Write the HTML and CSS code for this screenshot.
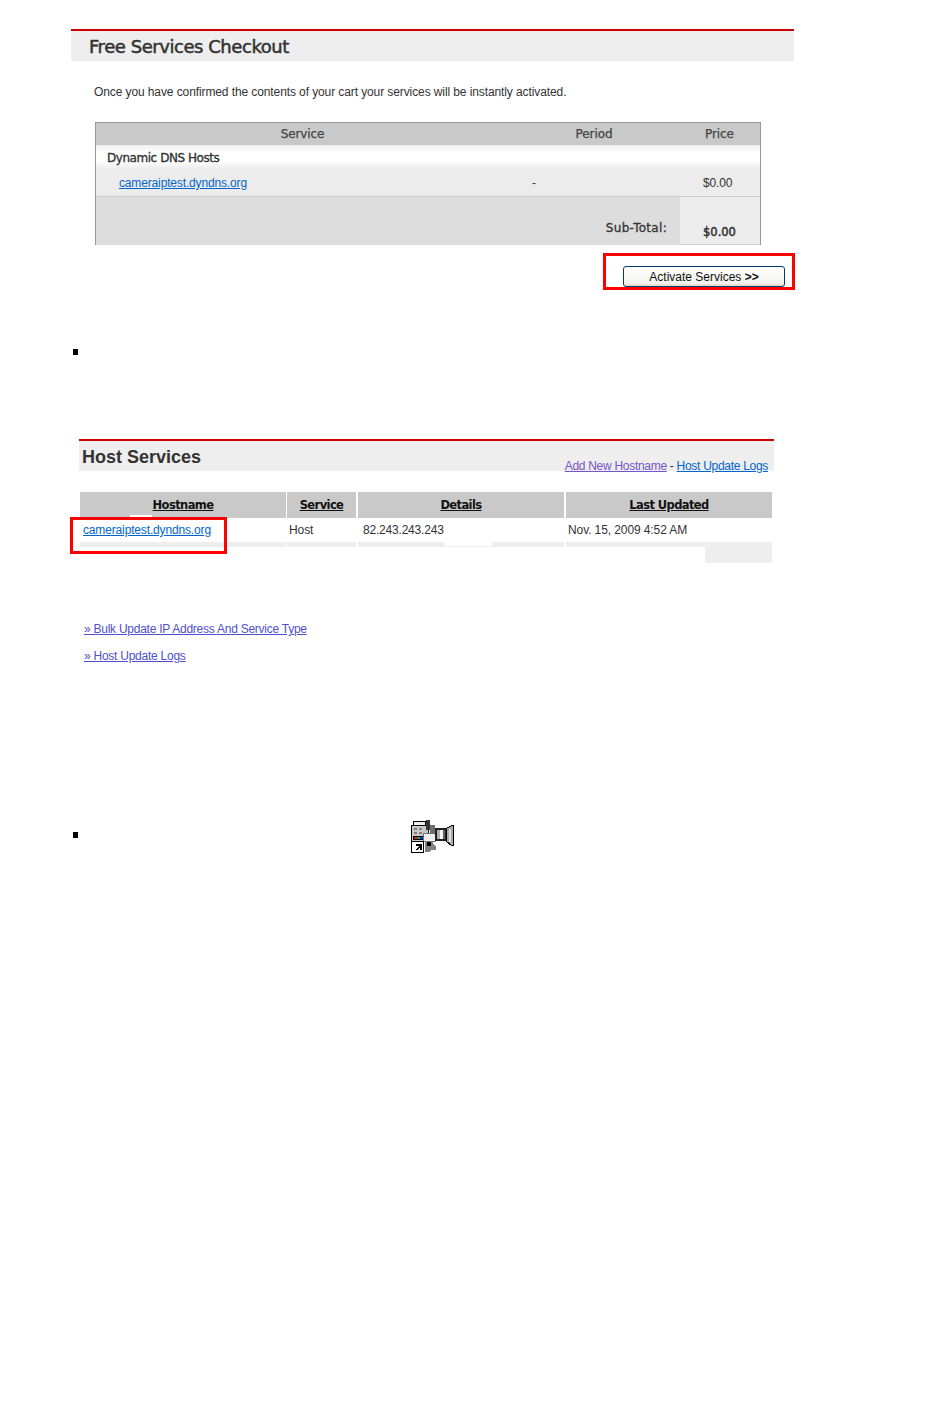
FILE: index.html
```html
<!DOCTYPE html>
<html lang="en">
<head>
<meta charset="utf-8">
<title>Free Services Checkout</title>
<link rel="stylesheet" href="styles.css">
</head>
<body>
<main class="page">
  <section class="checkout">
    <header class="panel-head panel-head-checkout"><h1 class="title-checkout">Free Services Checkout</h1></header>
    <p class="intro">Once you have confirmed the contents of your cart your services will be instantly activated.</p>
    <div class="cart">
      <div class="cart-row cart-header"><span class="c-service">Service</span><span class="c-period">Period</span><span class="c-price">Price</span></div>
      <div class="cart-group">Dynamic DNS Hosts</div>
      <div class="cart-row cart-item"><span class="c-host"><a class="link" href="#">cameraiptest.dyndns.org</a></span><span class="c-dash">-</span><span class="c-cost">$0.00</span></div>
      <div class="cart-total"><span class="total-label">Sub-Total:</span><span class="total-value">$0.00</span></div>
    </div>
    <div class="action-row">
      <div class="callout callout-button"><button class="activate" type="button">Activate Services <b>&gt;&gt;</b></button></div>
    </div>
  </section>

  <div class="bullet-row bullet-one"><span class="bullet"></span></div>

  <section class="hosts">
    <header class="panel-head panel-head-hosts">
      <h2 class="title-hosts">Host Services</h2>
      <div class="head-links"><a class="link visited" href="#">Add New Hostname</a> - <a class="link" href="#">Host Update Logs</a></div>
    </header>
    <div class="host-table">
      <div class="host-row host-header">
        <a class="th th-first" href="#">Hostname</a><a class="th" href="#">Service</a><a class="th" href="#">Details</a><a class="th" href="#">Last Updated</a>
      </div>
      <div class="host-row host-body">
        <span class="td td-host"><a class="link" href="#">cameraiptest.dyndns.org</a></span>
        <span class="td">Host</span>
        <span class="td td-ip">82.243.243.243</span>
        <span class="td">Nov. 15, 2009 4:52 AM</span>
      </div>
      <div class="host-row host-foot">
        <span class="tf tf-first"></span><span class="tf"></span><span class="tf tf-details"></span><span class="tf tf-updated"></span>
      </div>
      <div class="callout callout-host"></div>
    </div>
    <nav class="host-links">
      <a class="link indigo" href="#">» Bulk Update IP Address And Service Type</a>
      <a class="link indigo" href="#">» Host Update Logs</a>
    </nav>
  </section>

  <div class="bullet-row bullet-two">
    <span class="bullet"></span>
    <svg class="camera" width="44" height="36" viewBox="0 0 44 36" shape-rendering="crispEdges" aria-label="Camera shortcut">
      <path d="M0.5 5.500h17v16h-17z" fill="#c8c8c8" stroke="#000"/>
      <path d="M2.500 1.500h12v4h-12z" fill="#eee" stroke="#000"/>
      <path d="M15 0h4v10h-4z" fill="#333"/>
      <path d="M19 5h5v9h-5z" fill="#707070"/>
      <rect x="3" y="8" width="3" height="2" fill="#808080"/><rect x="8" y="8" width="3" height="2" fill="#808080"/>
      <rect x="3" y="12" width="3" height="2" fill="#808080"/><rect x="8" y="12" width="3" height="2" fill="#808080"/>
      <rect x="2" y="16" width="11" height="4" fill="#000"/>
      <rect x="3" y="17" width="3" height="2" fill="#e01010"/><rect x="6" y="17" width="3" height="2" fill="#10b040"/><rect x="9" y="17" width="3" height="2" fill="#1030e0"/>
      <path d="M12.500 13.500h12v8h-12z" fill="#eee" stroke="#707070"/>
      <path d="M24 8h11v13h-11z" fill="#202020"/>
      <path d="M26 10h3v9h-3z" fill="#b0b0b0"/>
      <path d="M29 10h3v9h-3z" fill="#f4f4f4"/>
      <path d="M32 10h2v9h-2z" fill="#606060"/>
      <path d="M35.500 8.500l5-3h1.500v20h-1.500l-5-4z" fill="#a8a8a8" stroke="#000"/>
      <path d="M38 9h2v13h-2z" fill="#e0e0e0"/>
      <path d="M14 21h8v3l3 3v3h-4l-3 2h-4z" fill="#808080"/>
      <path d="M16 22h4v4h-4z" fill="#000"/>
      <rect x="0.500" y="21.500" width="12" height="11" fill="#fff" stroke="#000"/>
      <path d="M4 30l2-2 1-1 1-1h-3v-2h6v6h-2v-3l-3 3z" fill="#000"/>
    </svg>
  </div>
</main>
</body>
</html>
```
FILE: styles.css
```css
* { box-sizing: border-box; }
html, body { margin: 0; padding: 0; background: #fff; }
body { height: 1420px; overflow: hidden; font-family: "Liberation Sans", Arial, sans-serif; color: #333; }
.page { padding: 29px 0 0 71px; width: 795px; }
a { color: inherit; }
.link { color: #0066cc; text-decoration: underline; }
.visited { color: #7755cc; }
.indigo { color: #4f4fd0; }

.panel-head { background: #eee; border-top: 2px solid #cc0000; height: 32px; }
.panel-head-checkout { width: 723px; padding: 5px 0 0 18px; }
h1, h2 { margin: 0; font-family: "DejaVu Sans", sans-serif; font-size: 18px; line-height: 22px; color: #333; }
.title-checkout { letter-spacing: -0.45px; font-weight: 400; -webkit-text-stroke: 0.5px #333; }
.intro { margin: 0; padding: 24px 0 0 23px; font-size: 12px; line-height: 14px; letter-spacing: -0.1px; height: 61px; color: #333; }

.cart { margin-left: 24px; width: 666px; height: 123px; border: 1px solid #999; border-width: 1px 1px 0; font-size: 11px; }
.cart-row { display: grid; grid-template-columns: 413px 170px 1fr; }
.cart-header { height: 22px; background: #c9c9c9; font-family: "DejaVu Sans", sans-serif; font-size: 12px; letter-spacing: -0.1px; line-height: 22px; color: #444; text-align: center; -webkit-text-stroke: 0.25px #444; }
.cart-group { height: 23px; padding-left: 11px; font-family: "DejaVu Sans", sans-serif; font-size: 12px; letter-spacing: -0.45px; line-height: 26px; color: #333; -webkit-text-stroke: 0.35px #333; background: linear-gradient(#eee, #fff 35%, #fff 70%, #eee); }
.cart-item { height: 29px; background: #ececec; border-bottom: 1px solid #ccc; line-height: 30px; font-size: 12px; letter-spacing: -0.15px; }
.c-host { padding-left: 23px; }
.c-dash { padding-left: 23px; }
.c-cost { padding-left: 24px; }
.cart-total { display: flex; height: 48px; background: #ddd; }
.total-label { width: 584px; text-align: right; padding: 24px 13px 0 0; font-family: "DejaVu Sans", sans-serif; font-size: 12px; letter-spacing: 0.3px; -webkit-text-stroke: 0.3px #333; }
.total-value { width: 80px; background: #ececec; border-bottom: 1px solid #ccc; padding: 28px 0 0 23px; font-family: "DejaVu Sans", sans-serif; font-size: 11.5px; -webkit-text-stroke: 0.5px #333; }

.action-row { display: flex; justify-content: flex-end; padding: 8px 0 0; width: 724px; }
.callout { border: 3px solid #f00; }
.callout-button { width: 192px; height: 37px; display: flex; justify-content: flex-end; padding: 10px 7px 0 0; }
.activate { width: 162px; height: 21px; padding: 0; border: 1px solid #003c74; border-radius: 3px; background: linear-gradient(#fff, #f4f4ec 85%, #dcd8c8); font: 12px/18px "Liberation Sans", sans-serif; letter-spacing: 0; color: #111; }

.bullet-row { display: flex; }
.bullet { width: 5px; height: 6px; background: #000; margin-left: 2px; flex: none; }
.bullet-one { padding-top: 59px; height: 149px; }

.hosts { margin-left: 8px; }
.panel-head-hosts { width: 695px; padding: 5px 0 0 3px; display: flex; justify-content: space-between; }
.title-hosts { font-family: "Liberation Sans", sans-serif; font-size: 18px; font-weight: 700; letter-spacing: 0; }
.head-links { padding: 13px 6px 0 0; font-size: 12px; line-height: 14px; letter-spacing: -0.29px; }

.host-table { position: relative; margin: 21px 0 0 1px; width: 692px; }
.host-row { display: grid; grid-template-columns: 205px 69px 206px 206px; column-gap: 2px; }
.host-header { height: 24px; }
.th { background: #c9c9c9; text-align: center; font-family: "DejaVu Sans", sans-serif; font-size: 11.5px; font-weight: 700; line-height: 26px; color: #111; letter-spacing: -0.6px; }
.th-first { margin-right: -1px; background: linear-gradient(#c9c9c9 23px, transparent 23px), linear-gradient(90deg, #c9c9c9 50px, #fff 50px, #fff 72px, #c9c9c9 72px); }
.host-body { height: 26px; }
.td { padding: 7px 0 0 2px; font-size: 12px; line-height: 15px; letter-spacing: -0.1px; color: #333; }
.td-host { padding-left: 3px; letter-spacing: -0.15px; }
.td-ip { padding-left: 5px; letter-spacing: -0.2px; }
.host-foot { height: 21px; }
.tf { background: #eee; height: 5px; }
.tf-first { margin-right: -1px; }
.tf-details { background: linear-gradient(transparent 4px, #eee 4px), linear-gradient(90deg, #eee 87px, #fff 87px, #fff 134px, #eee 134px); }
.tf-updated { height: 21px; background: linear-gradient(#eee 5px, transparent 5px), linear-gradient(90deg, transparent 139px, #eee 139px); }
.callout-host { position: absolute; left: -10px; top: 25px; width: 157px; height: 37px; }

.host-links { display: flex; flex-direction: column; align-items: flex-start; gap: 13px; padding: 59px 0 0 5px; font-size: 12px; line-height: 14px; letter-spacing: -0.25px; }

.bullet-two { padding-top: 169px; align-items: flex-start; }
.camera { margin: -12px 0 0 333px; }
```
